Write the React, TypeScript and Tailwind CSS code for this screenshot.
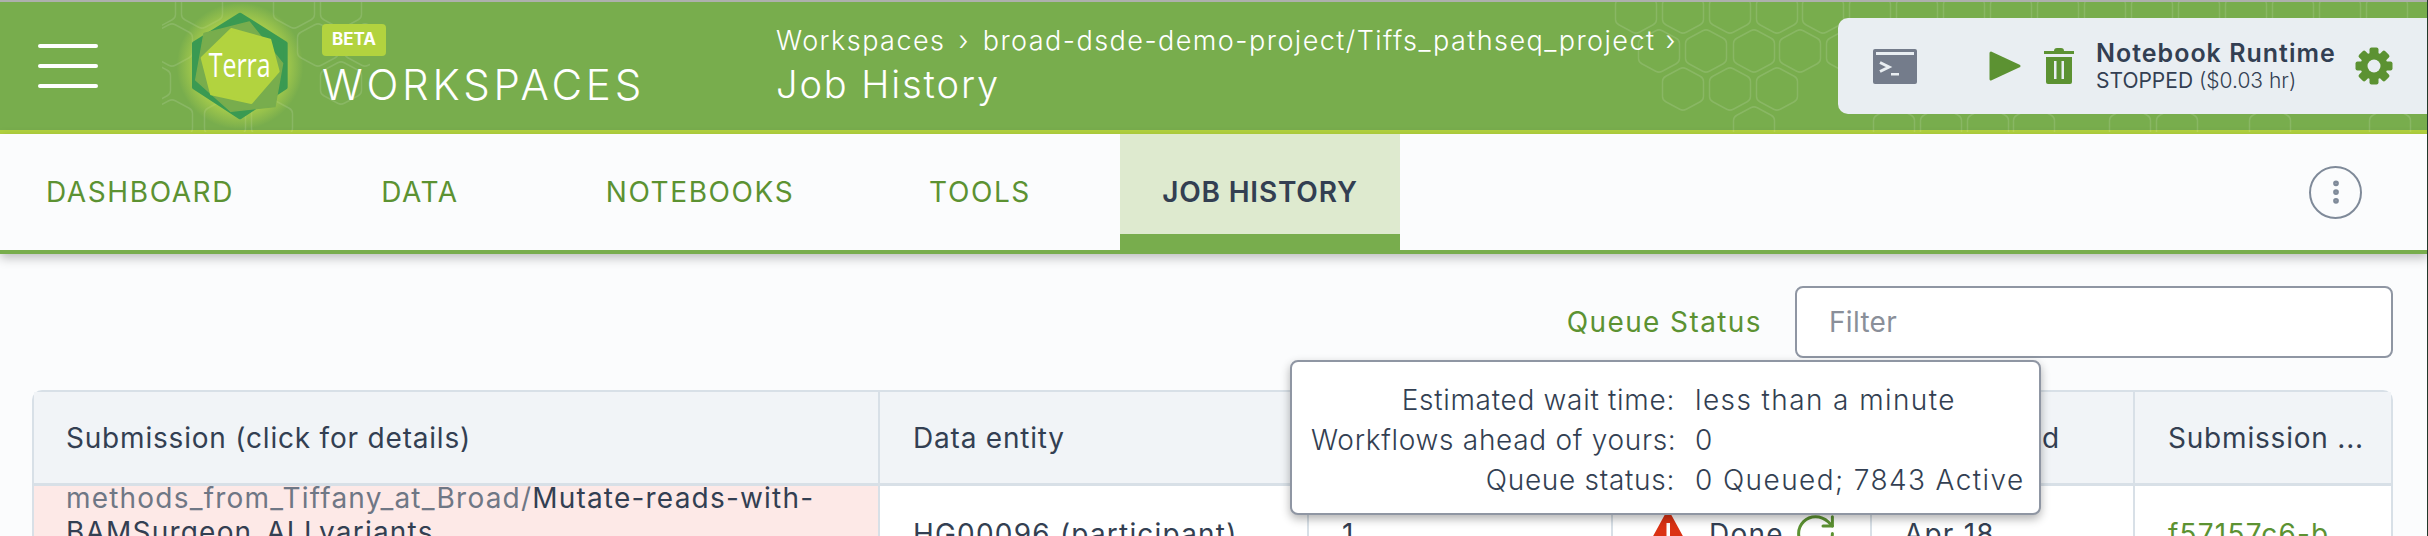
import { MoreVertical, RotateCw } from 'lucide-react';

const hexCenters = [
    // right side
    [1636, 10], [1683, 10], [1730, 10], [1777, 10], [1823, 10], [1870, 10], [1917, 10], [1964, 10], [2011, 10],
    [2058, 10], [2105, 10], [2152, 10], [2199, 10], [2246, 10], [2293, 10], [2340, 10], [2387, 10],
    [1659, 49], [1706, 49], [1754, 49], [1800, 49], [1847, 49],
    [1683, 87], [1730, 87], [1777, 87],
    [1754, 126], [1894, 126], [1941, 126], [1988, 126], [2034, 126], [2130, 126], [2177, 126], [2270, 126], [2390, 126],
    // left side, behind the logo
    [155, 5], [202, 5], [294, 5], [341, 5],
    [172, 43], [318, 43], [365, 43],
    [150, 81], [341, 81],
    [172, 119], [225, 119], [272, 119],
];

function hexPath(cx: number, cy: number) {
    const w = 20.5;
    const h = 22;
    const s = 11;
    const r = 0.16;
    const pts = [
        [cx, cy - h],
        [cx + w, cy - s],
        [cx + w, cy + s],
        [cx, cy + h],
        [cx - w, cy + s],
        [cx - w, cy - s],
    ];
    let d = '';
    pts.forEach((p, i) => {
        const prev = pts[(i + 5) % 6];
        const next = pts[(i + 1) % 6];
        const a = [p[0] + (prev[0] - p[0]) * r, p[1] + (prev[1] - p[1]) * r];
        const b = [p[0] + (next[0] - p[0]) * r, p[1] + (next[1] - p[1]) * r];
        d += `${i === 0 ? 'M' : 'L'}${a[0]} ${a[1]}Q${p[0]} ${p[1]} ${b[0]} ${b[1]}`;
    });
    return d + 'Z';
}

function HexPattern() {
    return (
        <svg className="absolute left-0 top-0" width="2428" height="130" viewBox="0 0 2428 130">
            <defs>
                <clipPath id="hexClip">
                    <rect x="162" y="0" width="208" height="130" />
                    <rect x="1500" y="0" width="928" height="130" />
                </clipPath>
            </defs>
            <g clipPath="url(#hexClip)">
                {hexCenters.map(([cx, cy]) => (
                    <path
                        key={`${cx}-${cy}`}
                        d={hexPath(cx, cy)}
                        fill="none"
                        stroke="#ffffff"
                        strokeOpacity="0.13"
                        strokeWidth="1.5"
                    />
                ))}
            </g>
        </svg>
    );
}

function TerraLogo() {
    return (
        <svg width="132" height="128" viewBox="0 0 396 384" className="shrink-0">
            <defs>
                <radialGradient id="logoGlow">
                    <stop offset="0.62" stopColor="#c6e04a" stopOpacity="0.75" />
                    <stop offset="1" stopColor="#c6e04a" stopOpacity="0" />
                </radialGradient>
            </defs>
            <circle cx="198" cy="192" r="190" fill="url(#logoGlow)" />
            <polygon
                points="198,38 335,124 335,256 198,346 60,256 60,124"
                fill="#3a9a52"
                stroke="#3a9a52"
                strokeWidth="12"
                strokeLinejoin="round"
            />
            <polygon
                points="226,60 326,184 303,314 170,328 65,234 90,94"
                fill="#78ad4d"
                stroke="#78ad4d"
                strokeWidth="4"
                strokeLinejoin="round"
            />
            <polygon
                points="172,82 288,114 313,208 232,302 112,276 84,168"
                fill="#b2d33f"
                stroke="#b2d33f"
                strokeWidth="8"
                strokeLinejoin="round"
            />
            <text
                x="104"
                y="226"
                fill="#ffffff"
                fontSize="96"
                fontFamily="'Open Sans', sans-serif"
                textLength="186"
                lengthAdjust="spacingAndGlyphs"
            >
                Terra
            </text>
        </svg>
    );
}

function TerminalIcon() {
    return (
        <svg width="44" height="35" viewBox="0 0 44 35">
            <rect width="44" height="35" rx="2" fill="#747c8b" />
            <rect x="3" y="3" width="38" height="3" fill="#e9eef2" />
            <path d="M7 13.5 L16 18 L7 22.5" fill="none" stroke="#e9eef2" strokeWidth="3" />
            <rect x="18" y="24" width="8" height="2.5" fill="#e9eef2" />
        </svg>
    );
}

function PlayIcon() {
    return (
        <svg width="32" height="30" viewBox="0 0 32 30">
            <path d="M2 2 L30 15 L2 28 Z" fill="#5c9232" stroke="#5c9232" strokeWidth="3" strokeLinejoin="round" />
        </svg>
    );
}

function TrashIcon() {
    return (
        <svg width="30" height="36" viewBox="0 0 30 36">
            <path d="M10 3 Q10 0 13 0 H17 Q20 0 20 3 H30 V6 H0 V3 Z" fill="#5c9232" />
            <path d="M2 9 H28 V34 Q28 36 26 36 H4 Q2 36 2 34 Z" fill="#5c9232" />
            <rect x="10" y="13" width="2.5" height="18" fill="#e9eef2" />
            <rect x="17.5" y="13" width="2.5" height="18" fill="#e9eef2" />
        </svg>
    );
}

function GearIcon() {
    const teeth = [0, 45, 90, 135, 180, 225, 270, 315];
    return (
        <svg width="38" height="38" viewBox="0 0 38 38">
            {teeth.map((angle) => (
                <rect
                    key={angle}
                    x="14.5"
                    y="0.5"
                    width="9"
                    height="10"
                    rx="2"
                    fill="#5c9232"
                    transform={`rotate(${angle} 19 19)`}
                />
            ))}
            <circle cx="19" cy="19" r="13.5" fill="#5c9232" />
            <circle cx="19" cy="19" r="6.5" fill="#e9eef2" />
        </svg>
    );
}

function WarningIcon() {
    return (
        <svg width="50" height="46" viewBox="0 0 50 46">
            <path d="M25 2 L48 44 H2 Z" fill="#db3214" stroke="#db3214" strokeWidth="3" strokeLinejoin="round" />
            <rect x="23.5" y="13" width="3.5" height="18" fill="#ffffff" />
        </svg>
    );
}

const tabs = ['DASHBOARD', 'DATA', 'NOTEBOOKS', 'TOOLS'];

const columns = [
    { label: 'Submission (click for details)', width: 'w-[844px]', pad: 'pl-[32px]' },
    { label: 'Data entity', width: 'w-[429px]', pad: 'border-l-2 border-[#d8e0e7] pl-[33px]' },
    { label: 'No. of Workflows', width: 'w-[304px]', pad: 'border-l-2 border-[#d8e0e7] pl-[33px]' },
    { label: 'Status', width: 'w-[259px]', pad: 'border-l-2 border-[#d8e0e7] pl-[33px]' },
    { label: 'Submitted', width: 'w-[263px]', pad: 'border-l-2 border-[#d8e0e7] pl-[47px]' },
    { label: 'Submission ...', width: 'w-[258px]', pad: 'border-l-2 border-[#d8e0e7] pl-[33px]' },
];

const queueRows = [
    ['Estimated wait time:', 'less than a minute'],
    ['Workflows ahead of yours:', '0'],
    ['Queue status:', '0 Queued; 7843 Active'],
];

export default function App() {
    return (
        <div className="relative h-[536px] w-[2428px] overflow-hidden bg-[#fbfcfd] text-[#333f52] [font-family:Inter,sans-serif]">
            <header className="relative flex h-[134px] items-center border-b-4 border-t-2 border-b-[#b2d33f] border-t-[#aeb0ae] bg-[#78ad4d]">
                <HexPattern />

                <div className="relative ml-[38px] flex w-[60px] flex-col gap-[16px]">
                    <div className="h-[4px] rounded-sm bg-white" />
                    <div className="h-[4px] rounded-sm bg-white" />
                    <div className="h-[4px] rounded-sm bg-white" />
                </div>

                <div className="relative ml-[76px]">
                    <TerraLogo />
                </div>

                <div className="relative ml-[16px] w-[454px] self-start pt-[22px]">
                    <div className="flex h-[32px] w-[64px] items-center justify-center rounded bg-[#b2d33f] text-[17px] font-bold text-white">
                        BETA
                    </div>
                    <div className="mt-[5px] text-[42px] font-light leading-[48px] tracking-[3.8px] text-white">
                        WORKSPACES
                    </div>
                </div>

                <div className="relative self-start pt-[22px] font-light text-white">
                    <div className="flex items-center text-[27px] leading-[34px] tracking-[1.45px]">
                        <span>Workspaces</span>
                        <span className="mx-[13px]">›</span>
                        <span>broad-dsde-demo-project/Tiffs_pathseq_project</span>
                        <span className="ml-[10px]">›</span>
                    </div>
                    <div className="mt-[2px] text-[38px] leading-[48px] tracking-[1.9px]">Job History</div>
                </div>

                <div className="absolute bottom-[16px] right-0 top-[16px] flex w-[590px] items-center rounded-l-[10px] bg-[#e9eef2]">
                    <div className="ml-[35px]">
                        <TerminalIcon />
                    </div>
                    <div className="ml-[72px]">
                        <PlayIcon />
                    </div>
                    <div className="ml-[23px]">
                        <TrashIcon />
                    </div>
                    <div className="ml-[22px] w-[259px]">
                        <div className="text-[25px] font-semibold leading-[30px] tracking-[1px]">Notebook Runtime</div>
                        <div className="text-[21px] leading-[26px]">
                            STOPPED <span className="font-light">($0.03 hr)</span>
                        </div>
                    </div>
                    <GearIcon />
                </div>
            </header>

            <nav className="relative flex h-[120px] items-stretch border-b-[4px] border-b-[#78ad4d] shadow-[0_4px_10px_rgba(0,0,0,0.25)]">
                {tabs.map((tab) => (
                    <div
                        key={tab}
                        className="flex w-[280px] items-center justify-center text-[28px] leading-[32px] tracking-[1.6px] text-[#5c9232]"
                    >
                        {tab}
                    </div>
                ))}
                <div className="flex w-[280px] items-center justify-center border-b-[16px] border-b-[#78ad4d] bg-[#deeacf] pt-[16px] text-[28px] font-semibold leading-[32px] tracking-[0.8px]">
                    JOB HISTORY
                </div>
                <div className="ml-auto mr-[66px] flex items-center">
                    <div className="flex h-[53px] w-[53px] items-center justify-center rounded-full border-2 border-[#7f8a99] text-[#7f8a99]">
                        <MoreVertical size={30} strokeWidth={2.6} />
                    </div>
                </div>
            </nav>

            <div className="ml-[32px] mr-[35px] mt-[32px] flex items-center justify-end">
                <span className="text-[28px] tracking-[1.4px] text-[#5c9232]">Queue Status</span>
                <div className="ml-[33px] flex h-[72px] w-[598px] items-center rounded-lg border-2 border-[#8f96a3] bg-white pl-[32px] text-[28px] tracking-[0.3px] text-[#8a8f99]">
                    Filter
                </div>
            </div>

            <div className="ml-[32px] mt-[32px] w-[2361px] rounded-t-[10px] border-x-2 border-t-2 border-[#d8e0e7] bg-white">
                <div className="flex h-[94px] border-b-[3px] border-[#d8e0e7] bg-[#f1f4f7]">
                    {columns.map((col) => (
                        <div
                            key={col.label}
                            className={`flex items-center ${col.width} ${col.pad} text-[28px] tracking-[0.8px]`}
                        >
                            {col.label}
                        </div>
                    ))}
                </div>

                <div className="flex h-[70px] text-[28px] leading-[34px] tracking-[1.2px]">
                    <div className="w-[844px] overflow-hidden bg-[#fde9e7] pl-[32px]">
                        <div className="-mt-[5px]">
                            <span className="text-[#6f7785]">methods_from_Tiffany_at_Broad/</span>Mutate-reads-with-
                            <br />
                            BAMSurgeon_ALLvariants
                        </div>
                    </div>
                    <div className="w-[429px] border-l-2 border-[#d8e0e7] pl-[33px] pt-[31px]">HG00096 (participant)</div>
                    <div className="w-[304px] border-l-2 border-[#d8e0e7] pl-[33px] pt-[31px]">1</div>
                    <div className="flex w-[259px] items-start border-l-2 border-[#d8e0e7] pl-[30px]">
                        <div className="shrink-0 pt-[24px]">
                            <WarningIcon />
                        </div>
                        <span className="ml-[16px] pt-[31px]">Done</span>
                        <RotateCw size={45} strokeWidth={1.6} className="ml-[9px] mt-[25px] shrink-0 text-[#5c9232]" />
                    </div>
                    <div className="w-[263px] border-l-2 border-[#d8e0e7] pl-[32px] pt-[31px]">Apr 18</div>
                    <div className="w-[258px] border-l-2 border-[#d8e0e7] pl-[33px] pt-[31px] text-[#5c9232]">f57157c6-b</div>
                </div>
            </div>

            <div className="absolute left-[1290px] top-[360px] h-[155px] w-[751px] rounded-lg border-2 border-[#8f96a3] bg-white pl-[19px] pt-[18px] shadow-[0_4px_10px_rgba(0,0,0,0.3)]">
                {queueRows.map(([label, value]) => (
                    <div key={label} className="flex text-[28px] font-light leading-[40px] tracking-[0.7px]">
                        <span className="w-[364px] shrink-0 whitespace-nowrap text-right">{label}</span>
                        <span className="ml-[20px] tracking-[1.4px]">{value}</span>
                    </div>
                ))}
            </div>

            <div className="absolute bottom-0 right-0 top-0 w-px bg-[#22382a]" />
        </div>
    );
}
